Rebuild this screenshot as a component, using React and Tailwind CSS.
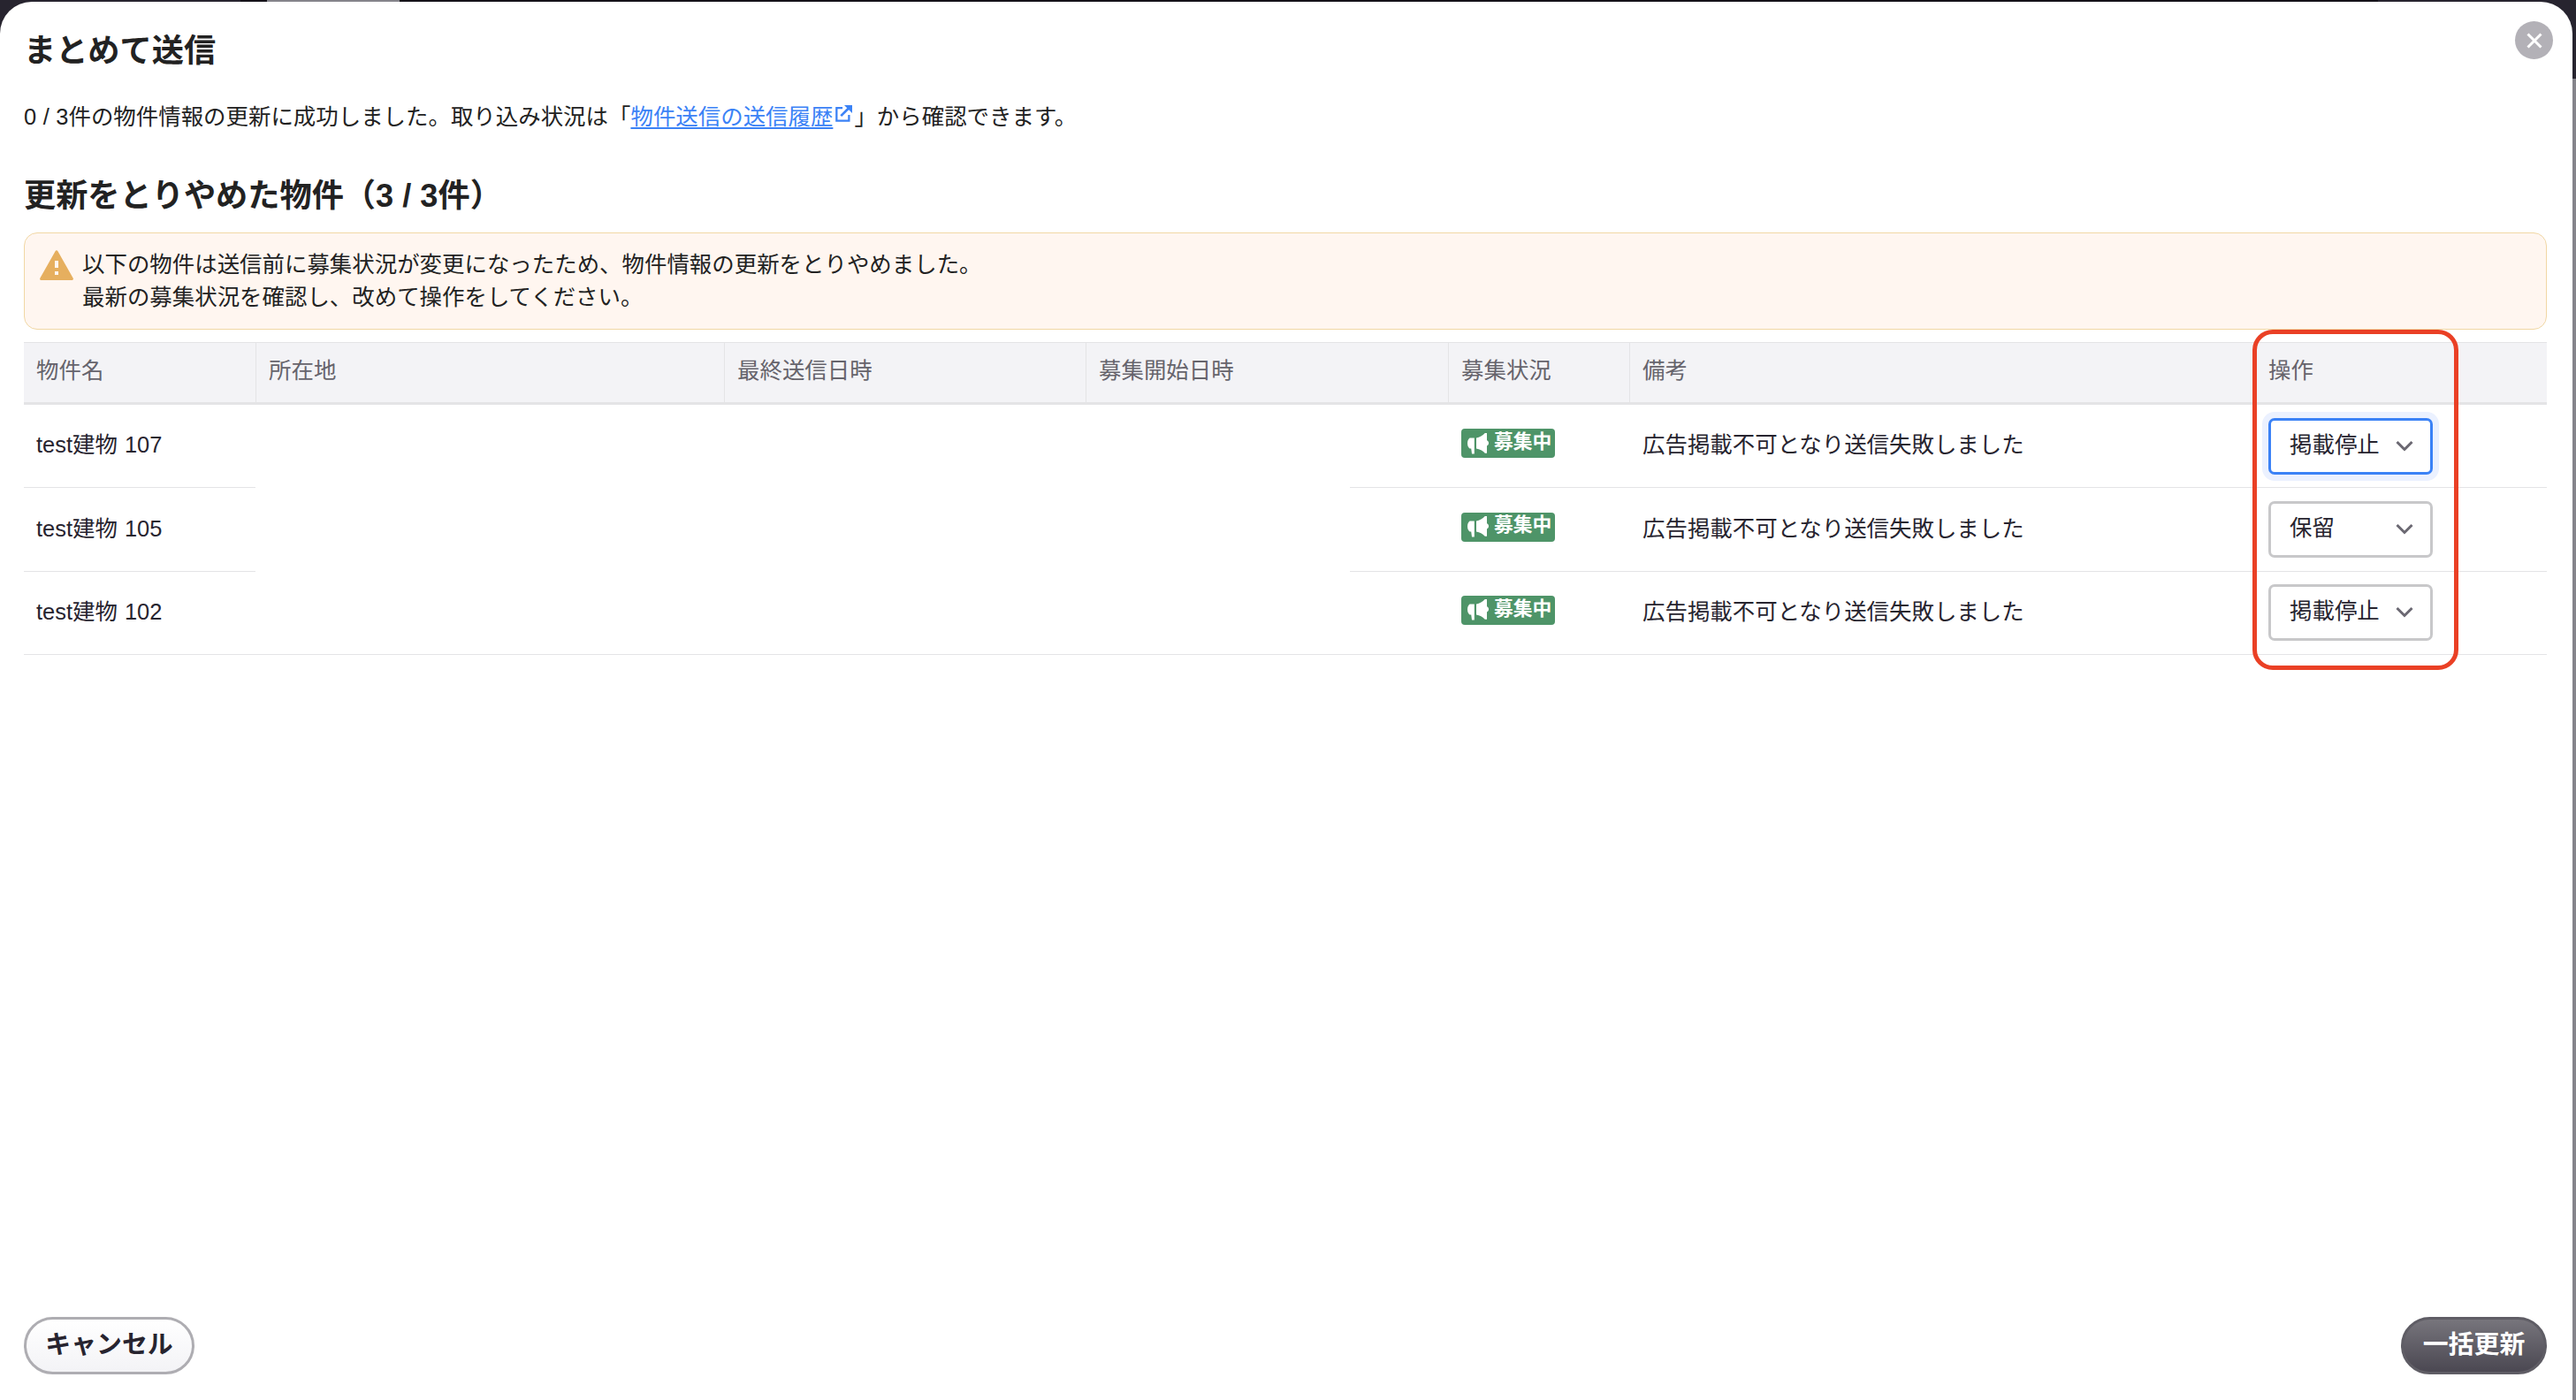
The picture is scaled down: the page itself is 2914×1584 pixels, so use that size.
import { useState } from 'react';

const COLUMNS = [
  { key: 'name', label: '物件名', width: 'w-[262px] pl-[14px]' },
  { key: 'address', label: '所在地', width: 'w-[530px] pl-[14px] border-l' },
  { key: 'sentAt', label: '最終送信日時', width: 'w-[409px] pl-[14px] border-l' },
  { key: 'startAt', label: '募集開始日時', width: 'w-[410px] pl-[14px] border-l' },
  { key: 'status', label: '募集状況', width: 'w-[205px] pl-[14px] border-l' },
  { key: 'note', label: '備考', width: 'w-[707px] pl-[14px] border-l' },
  { key: 'action', label: '操作', width: 'w-[331px] pl-[16px]' },
];

const ROWS = [
  { id: 107, name: 'test建物 107', action: '掲載停止', focused: true },
  { id: 105, name: 'test建物 105', action: '保留' },
  { id: 102, name: 'test建物 102', action: '掲載停止' },
];

const ExternalIcon = () => (
  <svg viewBox="0 0 20 20" className="ml-[3px] mr-[2px] inline-block h-[19px] w-[19px] align-[3px]" fill="none">
    <path d="M8.500 3.400H1.400v15.200h14.800V11.500" stroke="#3b82f6" strokeWidth="2.400" />
    <path d="M6.600 12.800 16 3.400" stroke="#3b82f6" strokeWidth="2.800" />
    <path d="M10.500 0H20v9.500Z" fill="#3b82f6" />
  </svg>
);

const WarningIcon = () => (
  <svg viewBox="0 0 38 34" className="mt-[19px] h-[34px] w-[38px] shrink-0">
    <path d="M19 1.800 36.400 32.400H1.600Z" fill="#e6af5f" stroke="#e6af5f" strokeWidth="3" strokeLinejoin="round" />
    <path d="M17 12h4v8h-4zM17 24h4v4h-4z" fill="#fff6f0" />
  </svg>
);

const MegaphoneIcon = () => (
  <svg viewBox="0 0 24 24" className="h-6 w-6" fill="#fff">
    <path d="M7.800 5.500V23.500H5L4.200 17.500H2.500C.8 16.200 0 14 0 11.500S.8 6.800 2.500 5.500Z" />
    <path d="M10 5.500C14 4.700 17 3 19.800 0H22v8.200c1.400.5 2 1.600 2 3.100s-.6 2.600-2 3.100v8.300h-2.200C17 19.800 14 18.200 10 17.500Z" />
  </svg>
);

const StatusBadge = () => (
  <span className="relative -top-[3px] flex h-[33px] w-[106px] items-center rounded-[4px] bg-[#4e9468] pl-[7px]">
    <MegaphoneIcon />
    <span className="relative -top-[2px] ml-[6px] text-[21.8px] font-bold leading-none text-white">募集中</span>
  </span>
);

const ActionSelect = ({ value, focused }) => (
  <button
    className={`flex h-[64px] w-[186px] items-center justify-between rounded-[7px] border-[3px] bg-white pr-[19px] pl-[21px] ${
      focused ? 'border-[#3b82f6] ring-[7px] ring-[#ebf1ff]' : 'border-[#c8c8ca]'
    }`}
  >
    <span className="relative -top-[2px]">{value}</span>
    <svg viewBox="0 0 20 14" className="h-[14px] w-5" fill="none">
      <path d="m1.500 2 8.500 8.500L18.500 2" stroke="#6b6872" strokeWidth="3" />
    </svg>
  </button>
);

const App = () => {
  const [rows] = useState(ROWS);

  return (
    <div className="relative h-[1584px] w-[2914px] overflow-hidden bg-[#85848b] font-['Liberation_Sans','Noto_Sans_CJK_JP',sans-serif] text-[25.45px] text-[#222]">
      {/* page behind the modal */}
      <div className="absolute inset-x-0 top-0 flex h-[89px] bg-[#27242f]">
        <div className="ml-[272px] h-[2px] w-[30px] bg-[#151219]" />
        <div className="h-[2px] w-[150px] bg-[#85848b]" />
        <div className="h-[2px] w-[2238px] bg-[#151219]" />
      </div>

      <div className="absolute top-[2px] left-0 flex h-[1582px] w-[2910px] flex-col rounded-t-[36px] bg-white px-[27px]">
        <button className="absolute top-[22px] right-[22px] flex h-[43px] w-[43px] items-center justify-center rounded-full bg-[#b3b1b7]">
          <svg viewBox="0 0 18 18" className="h-[18px] w-[18px]" fill="none">
            <path d="m1.500 1.500 15 15M16.500 1.500l-15 15" stroke="#fff" strokeWidth="3" />
          </svg>
        </button>

        <h1 className="mt-[29px] h-[54px] text-[36.2px] font-bold leading-[54px]">まとめて送信</h1>
        <p className="mt-[27px] h-[40px] whitespace-nowrap leading-[40px] [word-spacing:0.5px]">
          0 / 3件の物件情報の更新に成功しました。取り込み状況は「
          <a href="#" className="text-[#3b82f6]">
            <span className="underline decoration-2 underline-offset-[3px]">物件送信の送信履歴</span>
            <ExternalIcon />
          </a>
          」から確認できます。
        </p>
        <h2 className="mt-[43px] h-[54px] whitespace-nowrap text-[36.2px] font-bold leading-[54px]">
          更新をとりやめた物件（3 / 3件）
        </h2>

        <div className="mt-[14px] flex h-[110px] w-[2854px] rounded-[15px] border border-[#f1d7a4] bg-[#fff6f0] pl-[17px]">
          <WarningIcon />
          <p className="mt-[17px] ml-[10px] leading-[37px]">
            以下の物件は送信前に募集状況が変更になったため、物件情報の更新をとりやめました。
            <br />
            最新の募集状況を確認し、改めて操作をしてください。
          </p>
        </div>

        <div className="mt-[14px] w-[2854px]">
          <div className="flex h-[71px] border-t border-b-[3px] border-[#e4e4e6] bg-[#f3f3f6] text-[#66646c]">
            {COLUMNS.map((col) => (
              <div key={col.key} className={`${col.width} flex items-center border-[#e4e4e6] pb-[4px]`}>
                {col.label}
              </div>
            ))}
          </div>
          {rows.map((row, i) => (
            <div
              key={row.id}
              className="relative flex h-[94.4px] items-center border-b border-[#e4e4e6] text-[#27242f]"
            >
              <div className="w-[262px] pb-[3px] pl-[14px] [word-spacing:1px]">{row.name}</div>
              <div className="w-[1349px]" />
              <div className="w-[205px] pl-[15px]">
                <StatusBadge />
              </div>
              <div className="w-[707px] pb-[3px] pl-[15px]">{row.note || '広告掲載不可となり送信失敗しました'}</div>
              <div className="pl-[16px]">
                <ActionSelect value={row.action} focused={row.focused} />
              </div>
              {i < 2 && <div className="absolute -bottom-px left-[262px] h-px w-[1238px] bg-white" />}
            </div>
          ))}
        </div>

        <div className="mt-auto mb-[29px] flex w-[2854px] items-center justify-between text-[28.9px] font-bold">
          <button className="h-[65px] w-[193px] rounded-full border-[3px] border-[#aeadb2] bg-linear-to-b from-white to-[#f3f3f6] pb-px text-[#27242f]">
            キャンセル
          </button>
          <button className="h-[65px] w-[165px] rounded-full border-[3px] border-[#5f5d65] bg-linear-to-b from-[#77757c] to-[#4b4852] pb-px text-white">
            一括更新
          </button>
        </div>
      </div>

      {/* highlight round the action column */}
      <div className="pointer-events-none absolute top-[373px] left-[2548px] h-[385px] w-[233px] rounded-[23px] border-[5px] border-[#ea4025]" />
    </div>
  );
};

export default App;
